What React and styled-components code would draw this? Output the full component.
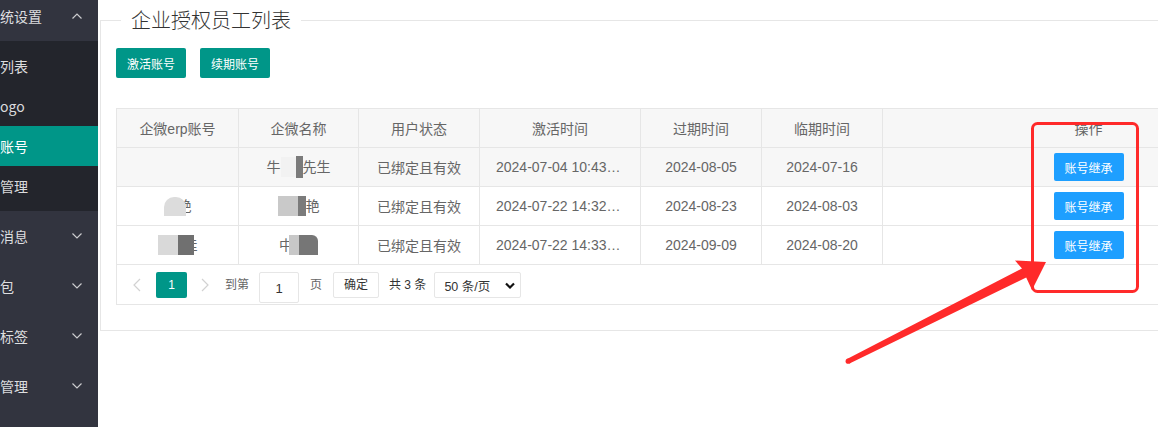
import React from 'react'
import styled, { createGlobalStyle } from 'styled-components'

const GlobalStyle = createGlobalStyle`
  html, body {
    margin: 0;
    padding: 0;
    background: #fff;
    overflow: hidden;
  }
  body {
    font-family: "Liberation Sans", "Noto Sans CJK SC", sans-serif;
  }
`

const teal = '#009688'
const line = '#e6e6e6'

const Page = styled.div`
  position: relative;
  display: flex;
  width: 1158px;
  height: 427px;
  overflow: hidden;
`

// ---- sidebar ----
const Sidebar = styled.nav`
  width: 98px;
  flex-shrink: 0;
  height: 100%;
  background: #32343f;
  overflow: hidden;
  font-size: 14px;
  font-family: "Noto Sans CJK SC", sans-serif;
`
const SideInner = styled.div`
  margin-top: -9px;
`
const NavRow = styled.div`
  display: flex;
  align-items: center;
  justify-content: space-between;
  height: ${p => p.$h || 50}px;
  padding-right: 16px;
  color: ${p => (p.$active ? '#fff' : 'rgba(255,255,255,0.85)')};
  background: ${p => (p.$active ? teal : 'transparent')};
  white-space: nowrap;
`
const SubMenu = styled.div`
  background: #23252c;
  padding: 5px 0;
`
const Chevron = ({ up }) => (
  <svg width="10" height="6" viewBox="0 0 10 6">
    <polyline
      points={up ? '0.5,5.5 5,1 9.5,5.5' : '0.5,0.5 5,5 9.5,0.5'}
      fill="none"
      stroke="rgba(255,255,255,0.75)"
      strokeWidth="1.2"
    />
  </svg>
)

// ---- main ----
const Main = styled.main`
  flex: 1;
  min-width: 0;
  padding: 6px 0 0 2px;
  overflow: hidden;
`
const Field = styled.fieldset`
  margin: 0;
  padding: 14px 15px 25px;
  border: 1px solid ${line};
  width: max-content;
`
const Legend = styled.legend`
  margin-left: 5px;
  padding: 0 10px;
  font-size: 20px;
  font-weight: 300;
  line-height: 28px;
  color: #333;
  font-family: "Noto Sans CJK SC", sans-serif;
`
const Toolbar = styled.div`
  display: flex;
  gap: 14px;
  margin-bottom: 30px;
`
const Btn = styled.button`
  width: 70px;
  height: ${p => p.$h || 30}px;
  padding: 0;
  border: none;
  border-radius: 2px;
  background: ${p => p.$bg || teal};
  color: #fff;
  font-size: 12px;
  font-family: "Noto Sans CJK SC", sans-serif;
  cursor: pointer;
`
const TableBox = styled.div`
  border: 1px solid ${line};
  width: 1178px;
`
const Table = styled.table`
  width: 1178px;
  border-collapse: separate;
  border-spacing: 0;
  table-layout: fixed;
`
const Cell = styled.td`
  box-sizing: border-box;
  height: 39px;
  padding: 0 16px;
  border-right: 1px solid ${line};
  border-bottom: 1px solid ${line};
  text-align: center;
  font-size: 14px;
  font-weight: normal;
  color: #666;
  white-space: nowrap;
  overflow: hidden;
  text-overflow: ellipsis;
  background: ${p => (p.$shade ? '#f7f7f7' : '#fff')};
`
// mosaic pieces over blurred names; positioned so they paint above the text
const Blk = styled.span`
  position: relative;
  display: inline-block;
  vertical-align: middle;
  width: ${p => p.$w}px;
  height: ${p => p.$h || 20}px;
  margin-left: ${p => p.$ml || 0}px;
  background: ${p => p.$c};
  border-radius: ${p => p.$r || 0};
`
const Txt = styled.span`
  display: inline-block;
  vertical-align: middle;
  margin-left: ${p => p.$ml || 0}px;
  line-height: 20px;
`

const Pager = styled.div`
  display: flex;
  align-items: flex-start;
  height: 39px;
  box-sizing: border-box;
  padding: 7px 0 0 7px;
  font-size: 12px;
  color: #333;
  font-family: "Liberation Sans", "Noto Sans CJK SC", sans-serif;
`
const PageArrow = styled.span`
  width: 26px;
  height: 26px;
  display: flex;
  align-items: center;
  justify-content: center;
  margin-right: ${p => p.$mr || 0}px;
`
const PageCur = styled.span`
  width: 31px;
  height: 26px;
  line-height: 26px;
  text-align: center;
  background: ${teal};
  color: #fff;
  border-radius: 2px;
  margin-right: 5px;
`
const PageText = styled.span`
  line-height: 26px;
  color: ${p => p.$c || '#333'};
  margin-right: ${p => p.$mr || 0}px;
  white-space: pre;
`
const PageInput = styled.span`
  box-sizing: border-box;
  width: 40px;
  height: 31px;
  line-height: 31px;
  border: 1px solid ${line};
  border-radius: 2px;
  text-align: center;
  font-size: 13px;
  margin-right: 11px;
`
const PageBtn = styled.span`
  box-sizing: border-box;
  width: 46px;
  height: 26px;
  line-height: 24px;
  border: 1px solid ${line};
  border-radius: 2px;
  text-align: center;
  margin-right: 10px;
`
const PageSelect = styled.span`
  box-sizing: border-box;
  display: flex;
  align-items: center;
  justify-content: space-between;
  width: 87px;
  height: 26px;
  margin-left: -2px;
  padding: 0 5px 0 9px;
  border: 1px solid ${line};
  border-radius: 2px;
  font-size: 12.5px;
`

const Overlay = styled.svg`
  position: absolute;
  left: 0;
  top: 0;
  pointer-events: none;
`

const Arrow = ({ dir }) => (
  <svg width="8" height="14" viewBox="0 0 8 14">
    <polyline
      points={dir === 'left' ? '7,1 1,7 7,13' : '1,1 7,7 1,13'}
      fill="none"
      stroke="#d2d2d2"
      strokeWidth="1.2"
    />
  </svg>
)

const Name = ({ parts }) => (
  <>
    {parts.map((p, i) =>
      p.t ? (
        <Txt key={i} $ml={p.ml}>
          {p.t}
        </Txt>
      ) : (
        <Blk key={i} $w={p.w} $h={p.h} $c={p.c} $r={p.r} $ml={p.ml} />
      )
    )}
  </>
)

const rows = [
  {
    erp: [],
    name: [{ t: '牛' }, { w: 15, c: '#f2f2f2' }, { w: 7, h: 22, c: '#7b7b7b' }, { t: '先生' }],
    act: '2024-07-04 10:43:21',
    exp: '2024-08-05',
    near: '2024-07-16',
    shade: true,
  },
  {
    erp: [{ w: 22, h: 19, c: '#dcdcdc', r: '10px 10px 0 0' }, { t: '艳', ml: -8 }],
    name: [{ w: 20, c: '#c9c9c9' }, { w: 8, c: '#7b7b7b' }, { t: '艳' }],
    act: '2024-07-22 14:32:10',
    exp: '2024-08-23',
    near: '2024-08-03',
  },
  {
    erp: [{ w: 20, c: '#d9d9d9' }, { w: 16, c: '#707070' }, { t: '佳', ml: -10 }],
    name: [{ t: '中' }, { w: 10, c: '#c8c8c8', ml: -4 }, { w: 19, c: '#767676', r: '0 6px 0 0' }],
    act: '2024-07-22 14:33:45',
    exp: '2024-09-09',
    near: '2024-08-20',
  },
]

const cols = [122, 120, 121, 161, 121, 121, 412]
const heads = ['企微erp账号', '企微名称', '用户状态', '激活时间', '过期时间', '临期时间', '操作']

export default function App() {
  return (
    <Page>
      <GlobalStyle />
      <Sidebar>
        <SideInner>
          <NavRow>
            统设置
            <Chevron up />
          </NavRow>
          <SubMenu>
            <NavRow $h={40}>列表</NavRow>
            <NavRow $h={40}>ogo</NavRow>
            <NavRow $h={40} $active>账号</NavRow>
            <NavRow $h={40}>管理</NavRow>
          </SubMenu>
          <NavRow>
            消息
            <Chevron />
          </NavRow>
          <NavRow>
            包
            <Chevron />
          </NavRow>
          <NavRow>
            标签
            <Chevron />
          </NavRow>
          <NavRow>
            管理
            <Chevron />
          </NavRow>
        </SideInner>
      </Sidebar>

      <Main>
        <Field>
          <Legend>企业授权员工列表</Legend>
          <Toolbar>
            <Btn>激活账号</Btn>
            <Btn>续期账号</Btn>
          </Toolbar>
          <TableBox>
            <Table>
              <colgroup>
                {cols.map((w, i) => (
                  <col key={i} style={{ width: w }} />
                ))}
              </colgroup>
              <thead>
                <tr>
                  {heads.map(h => (
                    <Cell as="th" key={h} $shade>
                      {h}
                    </Cell>
                  ))}
                </tr>
              </thead>
              <tbody>
                {rows.map((r, i) => (
                  <tr key={i}>
                    <Cell $shade={r.shade}>
                      <Name parts={r.erp} />
                    </Cell>
                    <Cell $shade={r.shade}>
                      <Name parts={r.name} />
                    </Cell>
                    <Cell $shade={r.shade}>已绑定且有效</Cell>
                    <Cell $shade={r.shade}>{r.act}</Cell>
                    <Cell $shade={r.shade}>{r.exp}</Cell>
                    <Cell $shade={r.shade}>{r.near}</Cell>
                    <Cell $shade={r.shade}>
                      <Btn $h={28} $bg="#1e9fff">账号继承</Btn>
                    </Cell>
                  </tr>
                ))}
              </tbody>
            </Table>
            <Pager>
              <PageArrow $mr={6}>
                <Arrow dir="left" />
              </PageArrow>
              <PageCur>1</PageCur>
              <PageArrow $mr={7}>
                <Arrow dir="right" />
              </PageArrow>
              <PageText $c="#666" $mr={10}>到第</PageText>
              <PageInput>1</PageInput>
              <PageText $c="#666" $mr={11}>页</PageText>
              <PageBtn>确定</PageBtn>
              <PageText $mr={10}>共 3 条</PageText>
              <PageSelect>
                50 条/页
                <svg width="10" height="7" viewBox="0 0 10 7">
                  <polyline points="1,1.5 5,5.5 9,1.5" fill="none" stroke="#111" strokeWidth="2.2" />
                </svg>
              </PageSelect>
            </Pager>
          </TableBox>
        </Field>
      </Main>

      <Overlay width="1158" height="427" viewBox="0 0 1158 427">
        <rect x="1032.5" y="123.5" width="105" height="168" rx="5" fill="none" stroke="#ff2a2a" strokeWidth="3" />
        <polygon
          points="847,359 1022,268.5 1015,260.5 1046,262 1032,290 1026.2,277.5 849.5,363.5"
          fill="#ff2a2a"
        />
        <circle cx="848.2" cy="361.2" r="2.6" fill="#ff2a2a" />
      </Overlay>
    </Page>
  )
}
